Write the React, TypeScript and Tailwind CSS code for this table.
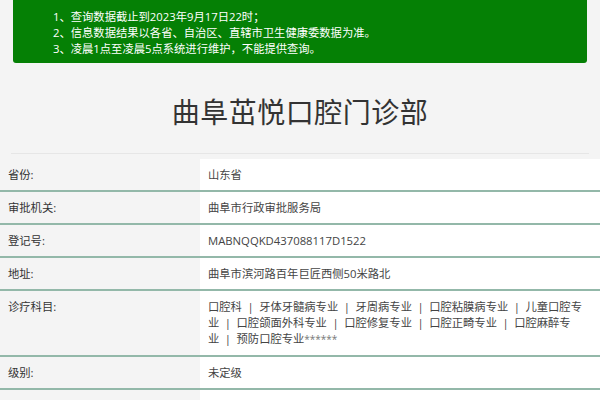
const subjects = [
  "口腔科",
  "牙体牙髓病专业",
  "牙周病专业",
  "口腔粘膜病专业",
  "儿童口腔专业",
  "口腔颌面外科专业",
  "口腔修复专业",
  "口腔正畸专业",
  "口腔麻醉专业",
  "预防口腔专业",
]

function Subjects() {
  return (
    <>
      {subjects.map((s, i) => (
        <span key={s}>
          {i > 0 ? <span className="mx-[5.5px]">|</span> : null}
          {s}
        </span>
      ))}
      <span className="text-[10px] text-[#777]">******</span>
    </>
  )
}

const rows: { label: string; value: React.ReactNode; multi?: boolean }[] = [
  { label: "省份:", value: "山东省" },
  { label: "审批机关:", value: "曲阜市行政审批服务局" },
  { label: "登记号:", value: "MABNQQKD437088117D1522" },
  { label: "地址:", value: "曲阜市滨河路百年巨匠西侧50米路北" },
  { label: "诊疗科目:", value: <Subjects />, multi: true },
  { label: "级别:", value: "未定级" },
  { label: "", value: "\u00a0" },
]

export default function App() {
  return (
    <div
      className="min-h-[400px] w-[600px] overflow-hidden bg-[#f4f4f4] text-[11.3px]"
      style={{ fontFamily: '"Open Sans", "Noto Sans CJK SC", sans-serif' }}
    >
      <div className="mx-[13px] h-[63px] rounded-b-[3px] bg-[#058005] pl-[40px] pt-[9px] leading-[16px] text-white">
        <p>1、查询数据截止到2023年9月17日22时；</p>
        <p>2、信息数据结果以各省、自治区、直辖市卫生健康委数据为准。</p>
        <p>3、凌晨1点至凌晨5点系统进行维护，不能提供查询。</p>
      </div>

      <div className="mx-[11px] flex h-[91px] items-center justify-center border-b border-[#e6e6e6] pt-[8px]">
        <h1 className="text-[28px] leading-none tracking-[0.5px] text-[#333]">曲阜茁悦口腔门诊部</h1>
      </div>

      <div className="mt-[5px]">
        {rows.map((r, i) => (
          <div key={i} className="grid grid-cols-[200px_1fr] border-b-2 border-[#93b8a9]">
            <div className="bg-[#f4f4f4] py-[8px] pl-[8px] leading-[15px] text-[#333]">{r.label}</div>
            <div
              className={`bg-white py-[8px] pl-[8px] pr-[10px] text-[#444] ${r.multi ? "leading-[16px]" : "leading-[15px]"}`}
            >
              {r.value}
            </div>
          </div>
        ))}
      </div>
    </div>
  )
}
